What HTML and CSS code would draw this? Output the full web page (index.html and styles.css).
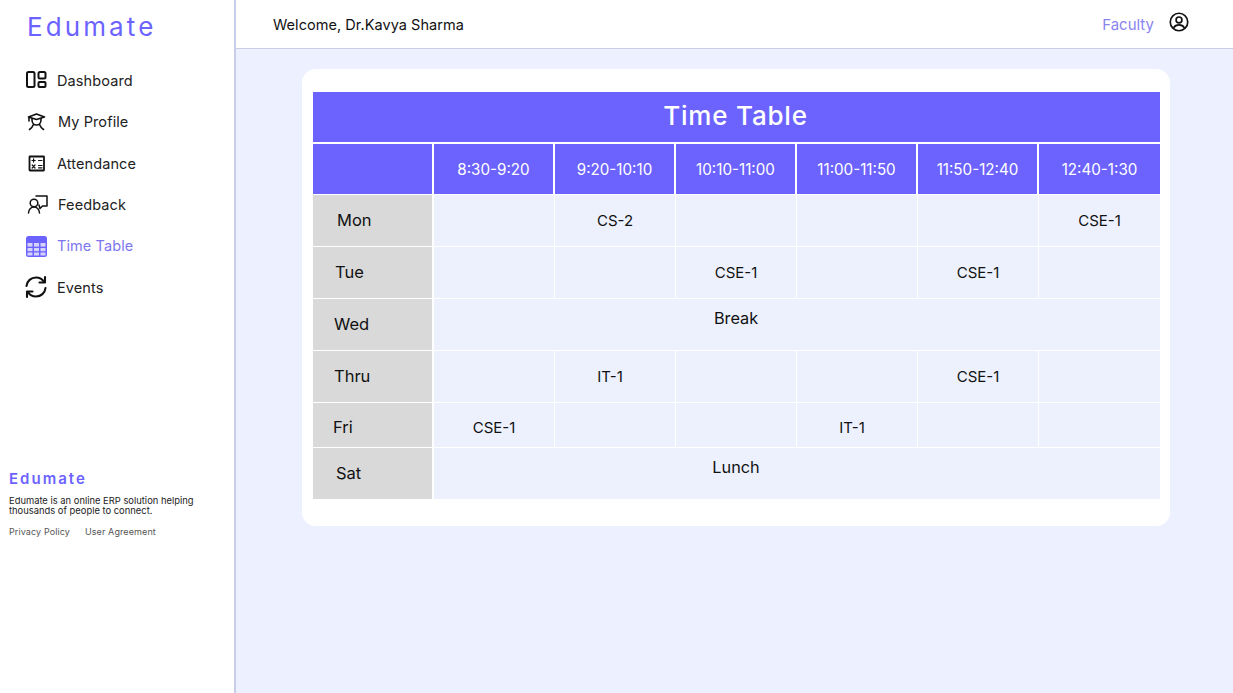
FILE: index.html
```html
<!DOCTYPE html>
<html>
<head>
  <meta charset="UTF-8" />
  <title>Edumate - Time Table</title>
  <link rel="stylesheet" href="styles.css">
</head>
<body>

  <aside class="sidebar">
    <div class="brand">Edumate</div>

    <nav class="nav">
      <a class="nav-item">
        <svg class="nav-icon" viewBox="0 0 24 24" fill="none" stroke="#111" stroke-width="2" stroke-linejoin="round">
          <rect x="3" y="4" width="7.500" height="15" rx="1.500" />
          <rect x="14.500" y="4" width="7" height="6.500" rx="1.500" />
          <rect x="14.500" y="14" width="7" height="5" rx="1" />
        </svg>
        <span class="nav-text t-57">Dashboard</span>
      </a>
      <a class="nav-item">
        <svg class="nav-icon" viewBox="0 0 24 24" fill="none" stroke="#111" stroke-width="1.600" stroke-linejoin="round" stroke-linecap="round">
          <path d="M4.500 7 12.500 4l8 3-8 2.500z" />
          <path d="M5 7.500V11" />
          <path d="M8 8.500V10c0 3 2 5 4.500 5s4.500-2 4.500-5V8.500" />
          <path d="M9.500 14.500C8.500 17 7 18.500 5.500 19.500M15.500 14.500c1 2.500 2.500 4 4 5" />
        </svg>
        <span class="nav-text t-58">My Profile</span>
      </a>
      <a class="nav-item">
        <svg class="nav-icon" viewBox="0 0 24 24" fill="none" stroke="#111" stroke-linecap="round">
          <rect x="5.500" y="5.500" width="14.500" height="14" rx="0.500" stroke-width="1.800" />
          <path d="M8 9.500h3.200M9.600 7.900v3.200M14.500 9.500h3.500M8.200 14l2.800 3M11 14l-2.800 3M14.500 14.500h3.500M14.500 16.800h3.500" stroke-width="1.200" />
        </svg>
        <span class="nav-text t-57">Attendance</span>
      </a>
      <a class="nav-item">
        <svg class="nav-icon" viewBox="0 0 24 24" fill="none" stroke="#111" stroke-width="1.500" stroke-linecap="round" stroke-linejoin="round">
          <path d="M12 4H23V14H18.500L16 16.500 15 13" />
          <circle cx="10" cy="11" r="3.800" />
          <path d="M4.500 21c0-3.500 2.500-6 5.500-6s5.500 2.500 5.500 6" />
        </svg>
        <span class="nav-text t-58">Feedback</span>
      </a>
      <a class="nav-item active">
        <svg class="nav-icon" viewBox="0 0 24 24">
          <rect x="2" y="2" width="21" height="21" rx="2.500" fill="#6c63ff" />
          <rect x="3.500" y="9" width="5" height="3.600" fill="#d5d2fc" />
          <rect x="10" y="9" width="5" height="3.600" fill="#d5d2fc" />
          <rect x="16.500" y="9" width="5" height="3.600" fill="#d5d2fc" />
          <rect x="3.500" y="14" width="5" height="3.200" fill="#d5d2fc" />
          <rect x="10" y="14" width="5" height="3.200" fill="#d5d2fc" />
          <rect x="16.500" y="14" width="5" height="3.200" fill="#d5d2fc" />
          <rect x="3.500" y="18.500" width="5" height="3" fill="#d5d2fc" />
          <rect x="10" y="18.500" width="5" height="3" fill="#d5d2fc" />
          <rect x="16.500" y="18.500" width="5" height="3" fill="#d5d2fc" />
        </svg>
        <span class="nav-text t-57">Time Table</span>
      </a>
      <a class="nav-item">
        <svg class="nav-icon" viewBox="0 0 24 24" fill="none" stroke="#111" stroke-width="2.100" stroke-linecap="round" stroke-linejoin="round">
          <path d="M2.500 11C3 6 7 2.500 12 2.500c3.500 0 6.500 1.800 8 4.500" />
          <path d="M21 2v5.500h-5.500" />
          <path d="M21.500 13c-.5 5-4.500 8.500-9.500 8.500-3.500 0-6.500-1.800-8-4.500" />
          <path d="M3 22v-5.500h5.500" />
        </svg>
        <span class="nav-text t-57">Events</span>
      </a>
    </nav>

    <div class="side-footer">
      <div class="footer-brand">Edumate</div>
      <p class="footer-text">Edumate is an online ERP solution helping thousands of people to connect.</p>
      <div class="footer-links">
        <a>Privacy Policy</a>
        <a>User Agreement</a>
      </div>
    </div>
  </aside>

  <div class="main">
    <header class="topbar">
      <span class="welcome">Welcome, Dr.Kavya Sharma</span>
      <div class="topbar-right">
        <span class="role">Faculty</span>
        <svg class="user-icon" viewBox="0 0 24 24" fill="none" stroke="#111" stroke-width="2">
          <circle cx="12" cy="12" r="10.500" />
          <circle cx="12" cy="9.500" r="3.500" />
          <path d="M5.500 19c1.500-2.500 3.800-3.500 6.500-3.500s5 1 6.500 3.500" />
        </svg>
      </div>
    </header>

    <section class="content">
      <div class="card">
        <table class="timetable">
          <tr>
            <th class="title" colspan="7">Time Table</th>
          </tr>
          <tr class="head">
            <th></th>
            <th>8:30-9:20</th>
            <th>9:20-10:10</th>
            <th>10:10-11:00</th>
            <th>11:00-11:50</th>
            <th>11:50-12:40</th>
            <th>12:40-1:30</th>
          </tr>
          <tr>
            <td class="day day-mon">Mon</td>
            <td></td>
            <td>CS-2</td>
            <td></td>
            <td></td>
            <td></td>
            <td>CSE-1</td>
          </tr>
          <tr>
            <td class="day day-tue">Tue</td>
            <td></td>
            <td></td>
            <td>CSE-1</td>
            <td></td>
            <td>CSE-1</td>
            <td></td>
          </tr>
          <tr>
            <td class="day day-wed">Wed</td>
            <td class="note" colspan="6">Break</td>
          </tr>
          <tr>
            <td class="day day-thu">Thru</td>
            <td></td>
            <td class="nudge">IT-1</td>
            <td></td>
            <td></td>
            <td>CSE-1</td>
            <td></td>
          </tr>
          <tr class="short">
            <td class="day day-fri">Fri</td>
            <td>CSE-1</td>
            <td></td>
            <td></td>
            <td class="nudge">IT-1</td>
            <td></td>
            <td></td>
          </tr>
          <tr class="last">
            <td class="day day-sat">Sat</td>
            <td class="note" colspan="6">Lunch</td>
          </tr>
        </table>
      </div>
    </section>
  </div>

</body>
</html>
```

FILE: styles.css
```css
* {
  box-sizing: border-box;
}

html, body {
  height: 100%;
}

body {
  margin: 0;
  display: flex;
  font-family: Inter, "Liberation Sans", sans-serif;
  background: #edf0fe;
  color: #111;
  overflow: hidden;
}

/* sidebar */
.sidebar {
  width: 236px;
  flex: none;
  background: #fff;
  border-right: 2px solid #c9cee8;
}

.brand {
  padding: 12px 0 0 27px;
  font-size: 26px;
  line-height: 30px;
  font-weight: 400;
  letter-spacing: 3.1px;
  color: #6c63ff;
}

.nav {
  margin-top: 17.6px;
  padding-left: 24px;
}

.nav-item {
  display: flex;
  align-items: center;
  height: 41.4px;
  font-size: 14.5px;
  color: #222;
}

.nav-item.active {
  color: #7d76f0;
}

.nav-icon {
  width: 24px;
  height: 24px;
  flex: none;
}

.nav-text {
  letter-spacing: 0.1px;
}

.t-57 { margin-left: 9px; }
.t-58 { margin-left: 10px; }

.side-footer {
  margin-top: 162.4px;
  padding-left: 9px;
}

.footer-brand {
  font-size: 15px;
  line-height: 18px;
  font-weight: 600;
  letter-spacing: 2px;
  color: #6c63ff;
}

.footer-text {
  margin: 8px 0 0;
  width: 200px;
  font-size: 9.4px;
  line-height: 10px;
  color: #222;
}

.footer-links {
  display: flex;
  gap: 15px;
  margin-top: 10px;
  font-size: 9px;
  line-height: 12px;
  letter-spacing: 0.1px;
  color: #555;
}

/* top bar */
.main {
  flex: 1;
  min-width: 0;
}

.topbar {
  height: 49px;
  display: flex;
  align-items: center;
  justify-content: space-between;
  padding: 0 44px 0 37px;
  background: #fff;
  border-bottom: 1px solid #c9cee8;
}

.welcome {
  font-size: 14.5px;
  letter-spacing: 0.05px;
}

.topbar-right {
  display: flex;
  align-items: center;
  gap: 15px;
}

.role {
  font-size: 15px;
  color: #8a84ee;
}

.user-icon {
  width: 20px;
  height: 20px;
  margin-bottom: 4px;
}

/* time table card */
.content {
  padding: 20px 0 0 66px;
}

.card {
  width: 868px;
  height: 457px;
  padding: 23px 10px 0 11px;
  background: #fff;
  border-radius: 14px;
}

.timetable {
  width: 847px;
  table-layout: fixed;
  border-collapse: separate;
  border-spacing: 0;
  font-size: 15px;
}

.timetable th,
.timetable td {
  height: 52px;
  padding: 0;
  text-align: center;
  font-weight: 400;
  background: #edf1fe;
  border-right: 1px solid #fff;
  border-bottom: 1px solid #fff;
}

.timetable th:last-child,
.timetable td:last-child {
  border-right: 0;
}

.timetable .title {
  height: 52px;
  padding: 0 2px 3px 0;
  background: #6c63ff;
  color: #fff;
  font-size: 26px;
  font-weight: 500;
  letter-spacing: 0.8px;
  border-bottom-width: 2px;
}

.timetable .head th {
  height: 51px;
  background: #6c63ff;
  color: #fff;
  font-size: 15.2px;
  border-right-width: 2px;
}

.timetable .head th:last-child {
  border-right-width: 0;
}

.timetable .short td {
  height: 45px;
  padding-top: 5px;
}

.timetable .last td {
  height: 51px;
  border-bottom: 0;
}

.timetable .day {
  background: #d9d9d9;
  text-align: left;
  font-size: 16.5px;
  padding-bottom: 2px;
  border-right-width: 2px;
}

.timetable .day-mon { padding-left: 24px; }
.timetable .day-tue { padding-left: 22px; }
.timetable .day-wed { padding-left: 21px; }
.timetable .day-thu { padding-left: 21px; }
.timetable .day-fri { padding-left: 20px; }
.timetable .day-sat { padding: 0 0 1px 23px; }

.timetable .note {
  padding: 0 122px 14px 0;
  font-size: 16.3px;
}

.timetable .last .note {
  padding-bottom: 14px;
}

.timetable .nudge {
  padding-right: 10px;
}
```
